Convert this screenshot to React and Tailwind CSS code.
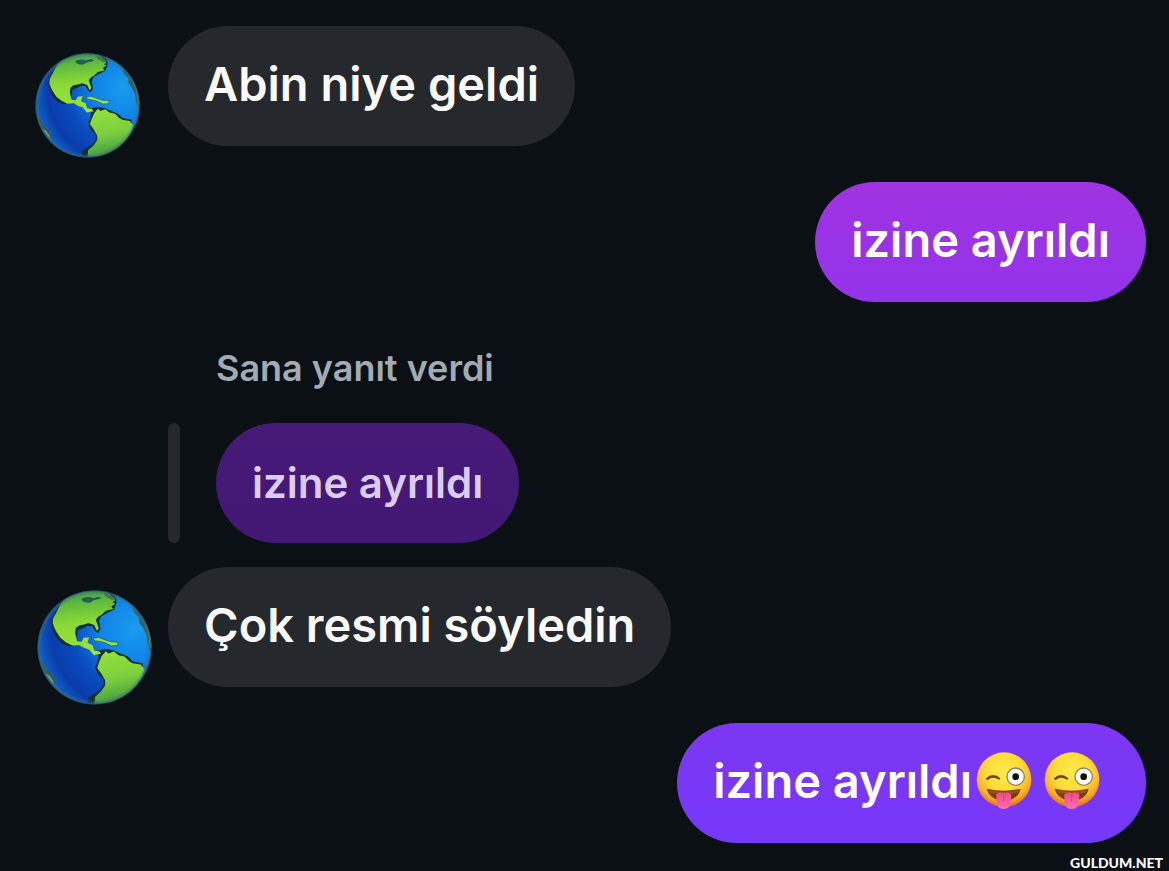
import React from "react";

// Earth avatar
const Globe = ({ id, className }) => (
  <svg viewBox="36 31 344 344" className={className} role="img" aria-label="Avatar">
    <defs>
      <radialGradient id={`${id}-sea`} cx="0.84" cy="0.34" r="0.85">
        <stop offset="0" stopColor="#1a9cf0" />
        <stop offset="0.35" stopColor="#1082e6" />
        <stop offset="0.62" stopColor="#0a4cc0" />
        <stop offset="0.85" stopColor="#0a3cab" />
        <stop offset="1" stopColor="#0d63c8" />
      </radialGradient>
      <linearGradient id={`${id}-north`} x1="0.45" y1="0" x2="0.55" y2="1">
        <stop offset="0" stopColor="#3f9c48" />
        <stop offset="0.22" stopColor="#62bd3e" />
        <stop offset="0.5" stopColor="#8bd936" />
        <stop offset="1" stopColor="#9ce440" />
      </linearGradient>
      <linearGradient id={`${id}-south`} x1="0.35" y1="0" x2="0.55" y2="1">
        <stop offset="0" stopColor="#94e03a" />
        <stop offset="0.5" stopColor="#7cd03e" />
        <stop offset="1" stopColor="#3f9646" />
      </linearGradient>
      <radialGradient id={`${id}-rim`}>
        <stop offset="0.92" stopColor="#2c6a86" stopOpacity="0" />
        <stop offset="0.97" stopColor="#3a6f80" stopOpacity="0.5" />
        <stop offset="1" stopColor="#26404a" stopOpacity="0.9" />
      </radialGradient>
      <clipPath id={`${id}-clip`}>
        <circle cx="208" cy="203" r="170" />
      </clipPath>
    </defs>
    <g clipPath={`url(#${id}-clip)`}>
      <rect x="36" y="31" width="344" height="344" fill={`url(#${id}-sea)`} />
      {/* Coast shadows */}
      <g fill="#15302f">
        <path d="M80 122L84 108L98 84L112 60L150 30L240 30L272 52L274 70L266 90L246 100L228 110L222 122L226 148L218 160L208 152L202 140L188 138L172 146L158 151L156 170L148 196L128 199L112 192L92 172L82 148Z" />
        <path d="M222 222L216 246L210 262L218 282L234 298L236 312L224 330L206 342L190 352L190 370L250 366L244 230Z" />
        <path d="M196 212L222 212L240 207L264 211L284 220L308 230L322 244L352 250L352 262L280 262Z" />
      </g>
      {/* North and Central America */}
      <path
        d="M84 116Q92 102 100 86Q108 66 130 48L150 30L235 30Q258 45 270 62L262 68L270 72L258 80L264 88L242 93L230 104L218 112L212 120L216 132L221 146L215 153L207 136L190 130L176 134L162 137L152 145L150 160L156 184L170 186L175 174L192 172L187 189L202 196L207 212L222 214L228 222L206 226L192 209L176 204L164 196L142 197L122 187L106 174L96 160L88 144L83 130Z"
        fill={`url(#${id}-north)`}
      />
      <path d="M94 156L108 180L112 188L98 172Z" fill="#15302f" />
      <path d="M168 58Q182 48 204 55L220 51L230 56L206 62L194 69Q172 70 168 58Z" fill="#275c56" />
      <path d="M236 38L272 56L262 62L240 50Z" fill="#4a7442" />
      <path d="M204 175L220 173L242 181L258 186L279 187L276 197L258 198L240 189L220 184L208 183Z" fill="#8fe34e" stroke="#1c5578" strokeWidth="2" />
      {/* South America */}
      <path
        d="M230 228L242 214L250 221L266 215L280 226L298 230L312 244L322 250L346 254L358 268L350 290L334 314L320 330L304 346L282 360L250 368L208 371L210 350L228 334L240 316L240 302L230 284L216 264L222 246Z"
        fill={`url(#${id}-south)`}
      />
      {/* Lands on the eastern and western edges */}
      <path d="M322 82L346 96L368 134L380 180L382 216L374 212L367 190L364 166L352 142L342 130L342 114L328 100Z" fill="#355e68" />
      <path d="M346 98Q386 150 379 206L373 200Q372 150 346 98Z" fill="#8d8a3c" />
      <path d="M44 242L56 250L62 268L78 282L90 300L88 312L68 296L48 270Z" fill="#3b554b" />
      <path d="M58 280L72 286L84 302L86 312Z" fill="#62b47c" />
    </g>
    <circle cx="208" cy="203" r="171" fill={`url(#${id}-rim)`} />
  </svg>
);

// Winking face with tongue
const WinkFace = ({ id }) => (
  <svg viewBox="46 52 168 174" className="w-14 h-[58px]" role="img" aria-label="😜">
    <defs>
      <radialGradient id={`${id}-face`} cx="0.5" cy="0.36" r="0.66">
        <stop offset="0" stopColor="#ffea4c" />
        <stop offset="0.5" stopColor="#ffdc3a" />
        <stop offset="0.76" stopColor="#fbb42a" />
        <stop offset="1" stopColor="#dc6c0c" />
      </radialGradient>
      <linearGradient id={`${id}-tongue`} x1="0" y1="0" x2="0" y2="1">
        <stop offset="0" stopColor="#ee4a8c" />
        <stop offset="1" stopColor="#ff70aa" />
      </linearGradient>
    </defs>
    <circle cx="130" cy="135" r="82" fill={`url(#${id}-face)`} />
    <path d="M76 131Q97 111 119 131Q118 137 113 134Q97 123 81 136Q76 137 76 131Z" fill="#7a4209" />
    <circle cx="165" cy="126" r="26" fill="#fff" stroke="#8f8461" strokeWidth="4" />
    <circle cx="165" cy="126" r="10" fill="#140d08" />
    <path d="M78 162Q130 174 180 162C176 184 156 198 130 198C104 198 83 184 78 162Z" fill="#7a3d10" />
    <path d="M83 166Q130 177 176 166L172 174Q130 182 88 174Z" fill="#96551a" />
    <path d="M107 179Q118 170 129 176Q141 170 152 179L151 200C150 216 142 223 129 223C116 223 108 216 107 200Z" fill={`url(#${id}-tongue)`} />
    <path d="M129 180L129 200" stroke="#dc3c7c" strokeWidth="3" strokeLinecap="round" />
  </svg>
);

const Bubble = ({ className, children }) => (
  <div
    className={`flex items-center rounded-[60px] pt-7 pb-8 text-[47px] leading-[60px] font-semibold ${className}`}
  >
    {children}
  </div>
);

const App = () => {
  return (
    <main className="relative min-h-screen bg-[#0b1014] pt-[26px] pb-7 font-['Inter',sans-serif]">
      {/* Incoming */}
      <div className="flex items-start">
        <div className="w-[168px] h-[120px] shrink-0 pl-[35px] pt-[27px]">
          <Globe id="globe-a" className="w-[105px] h-[105px]" />
        </div>
        <Bubble className="px-9 bg-[#25282d] text-[#fafafa]">Abin niye geldi</Bubble>
      </div>

      {/* Outgoing */}
      <div className="flex justify-end mt-9 pr-[23px]">
        <Bubble className="px-9 bg-linear-to-b from-[#a033e2] to-[#9333ea] text-white">
          izine ayrıldı
        </Bubble>
      </div>

      {/* Quoted reply */}
      <div className="mt-11 ml-[168px]">
        <p className="pl-12 text-[36px] leading-[44px] font-semibold text-[#a2aab4]">
          Sana yanıt verdi
        </p>
        <div className="flex mt-[33px] gap-9">
          <div className="w-3 rounded-full bg-[#25282d]"></div>
          <div className="rounded-[60px] bg-linear-to-b from-[#471a78] to-[#421874] px-9 py-[30px] text-[42px] leading-[60px] font-semibold text-[#dccdf0]">
            izine ayrıldı
          </div>
        </div>
      </div>

      {/* Incoming */}
      <div className="flex items-start mt-6">
        <div className="w-[168px] h-[120px] shrink-0 pl-[37px] pt-[23px]">
          <Globe id="globe-b" className="w-[115px] h-[115px]" />
        </div>
        <Bubble className="px-9 bg-[#25282d] text-[#fafafa]">Çok resmi söyledin</Bubble>
      </div>

      {/* Outgoing */}
      <div className="flex justify-end mt-9 pr-[23px]">
        <Bubble className="pl-9 pr-[46px] bg-linear-to-b from-[#7c37f2] to-[#7638fa] text-white">
          <span>izine ayrıldı</span>
          <span className="flex gap-3 pl-1">
            <WinkFace id="wink-a" />
            <WinkFace id="wink-b" />
          </span>
        </Bubble>
      </div>

      {/* Site mark */}
      <p className="absolute right-[6px] bottom-0 font-['Lato',sans-serif] text-[14px] leading-[16px] font-black text-white">
        GULDUM.NET
      </p>
    </main>
  );
};

export default App;
